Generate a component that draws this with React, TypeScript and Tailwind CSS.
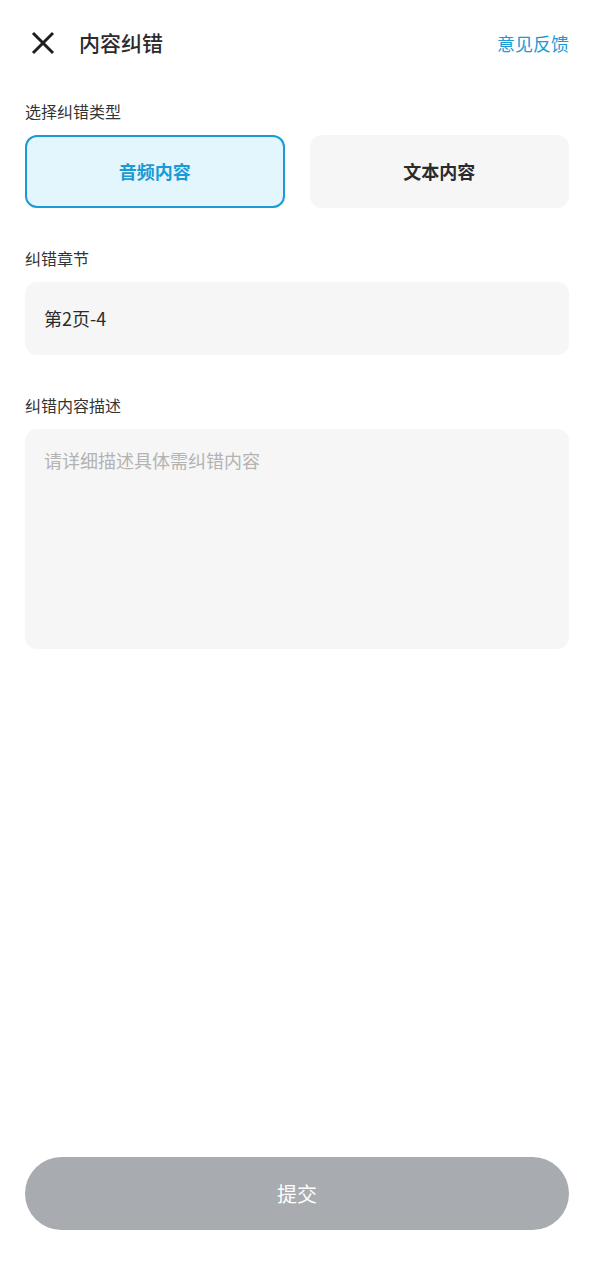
import { useState } from "react"

export default function App() {
  const [type, setType] = useState<"audio" | "text">("audio")

  return (
    <div
      className="flex h-[1280px] w-full flex-col bg-white text-[#333]"
      style={{ fontFamily: '"Noto Sans CJK SC", "Noto Sans", sans-serif' }}
    >
      {/* Header */}
      <header className="flex h-[86px] items-center justify-between px-[25px]">
        <div className="flex items-center">
          <button className="flex h-[36px] w-[36px] items-center justify-center">
            <svg width="24" height="24" viewBox="0 0 24 24" fill="none">
              <path d="M2 2L22 22M22 2L2 22" stroke="#1f1f1f" strokeWidth="3" strokeLinecap="butt" />
            </svg>
          </button>
          <h1 className="ml-[18px] text-[21px] font-medium text-[#2b2b2b]">内容纠错</h1>
        </div>
        <button className="text-[18px] text-[#1a9ad6]">意见反馈</button>
      </header>

      <main className="flex flex-col px-[25px]">
        {/* Type */}
        <p className="mt-[14px] text-[16px] leading-[22px] text-[#333]">选择纠错类型</p>
        <div className="mt-[13px] grid grid-cols-2 gap-[25px]">
          <button
            onClick={() => setType("audio")}
            className={
              type === "audio"
                ? "h-[73px] rounded-[12px] border-2 border-[#1a9ad6] bg-[#e3f5fd] text-[18px] font-bold text-[#1a9ad6]"
                : "h-[73px] rounded-[12px] bg-[#f6f6f6] text-[18px] font-bold text-[#2b2b2b]"
            }
          >
            音频内容
          </button>
          <button
            onClick={() => setType("text")}
            className={
              type === "text"
                ? "h-[73px] rounded-[12px] border-2 border-[#1a9ad6] bg-[#e3f5fd] text-[18px] font-bold text-[#1a9ad6]"
                : "h-[73px] rounded-[12px] bg-[#f6f6f6] text-[18px] font-bold text-[#2b2b2b]"
            }
          >
            文本内容
          </button>
        </div>

        {/* Chapter */}
        <p className="mt-[39px] text-[16px] leading-[22px] text-[#333]">纠错章节</p>
        <div className="mt-[13px] flex h-[73px] items-center rounded-[12px] bg-[#f6f6f6] px-[19px] text-[18px] text-[#2b2b2b]">
          第2页-4
        </div>

        {/* Description */}
        <p className="mt-[39px] text-[16px] leading-[22px] text-[#333]">纠错内容描述</p>
        <textarea
          placeholder="请详细描述具体需纠错内容"
          className="mt-[13px] h-[220px] resize-none rounded-[12px] bg-[#f6f6f6] px-[19px] py-[17px] text-[18px] leading-[28px] text-[#2b2b2b] outline-none placeholder:text-[#b3b3b3]"
        />
      </main>

      <div className="flex-1" />

      <div className="px-[25px] pb-[50px]">
        <button className="flex h-[73px] w-full items-center justify-center rounded-full bg-[#a8abaf] text-[20px] text-white">
          提交
        </button>
      </div>
    </div>
  )
}
